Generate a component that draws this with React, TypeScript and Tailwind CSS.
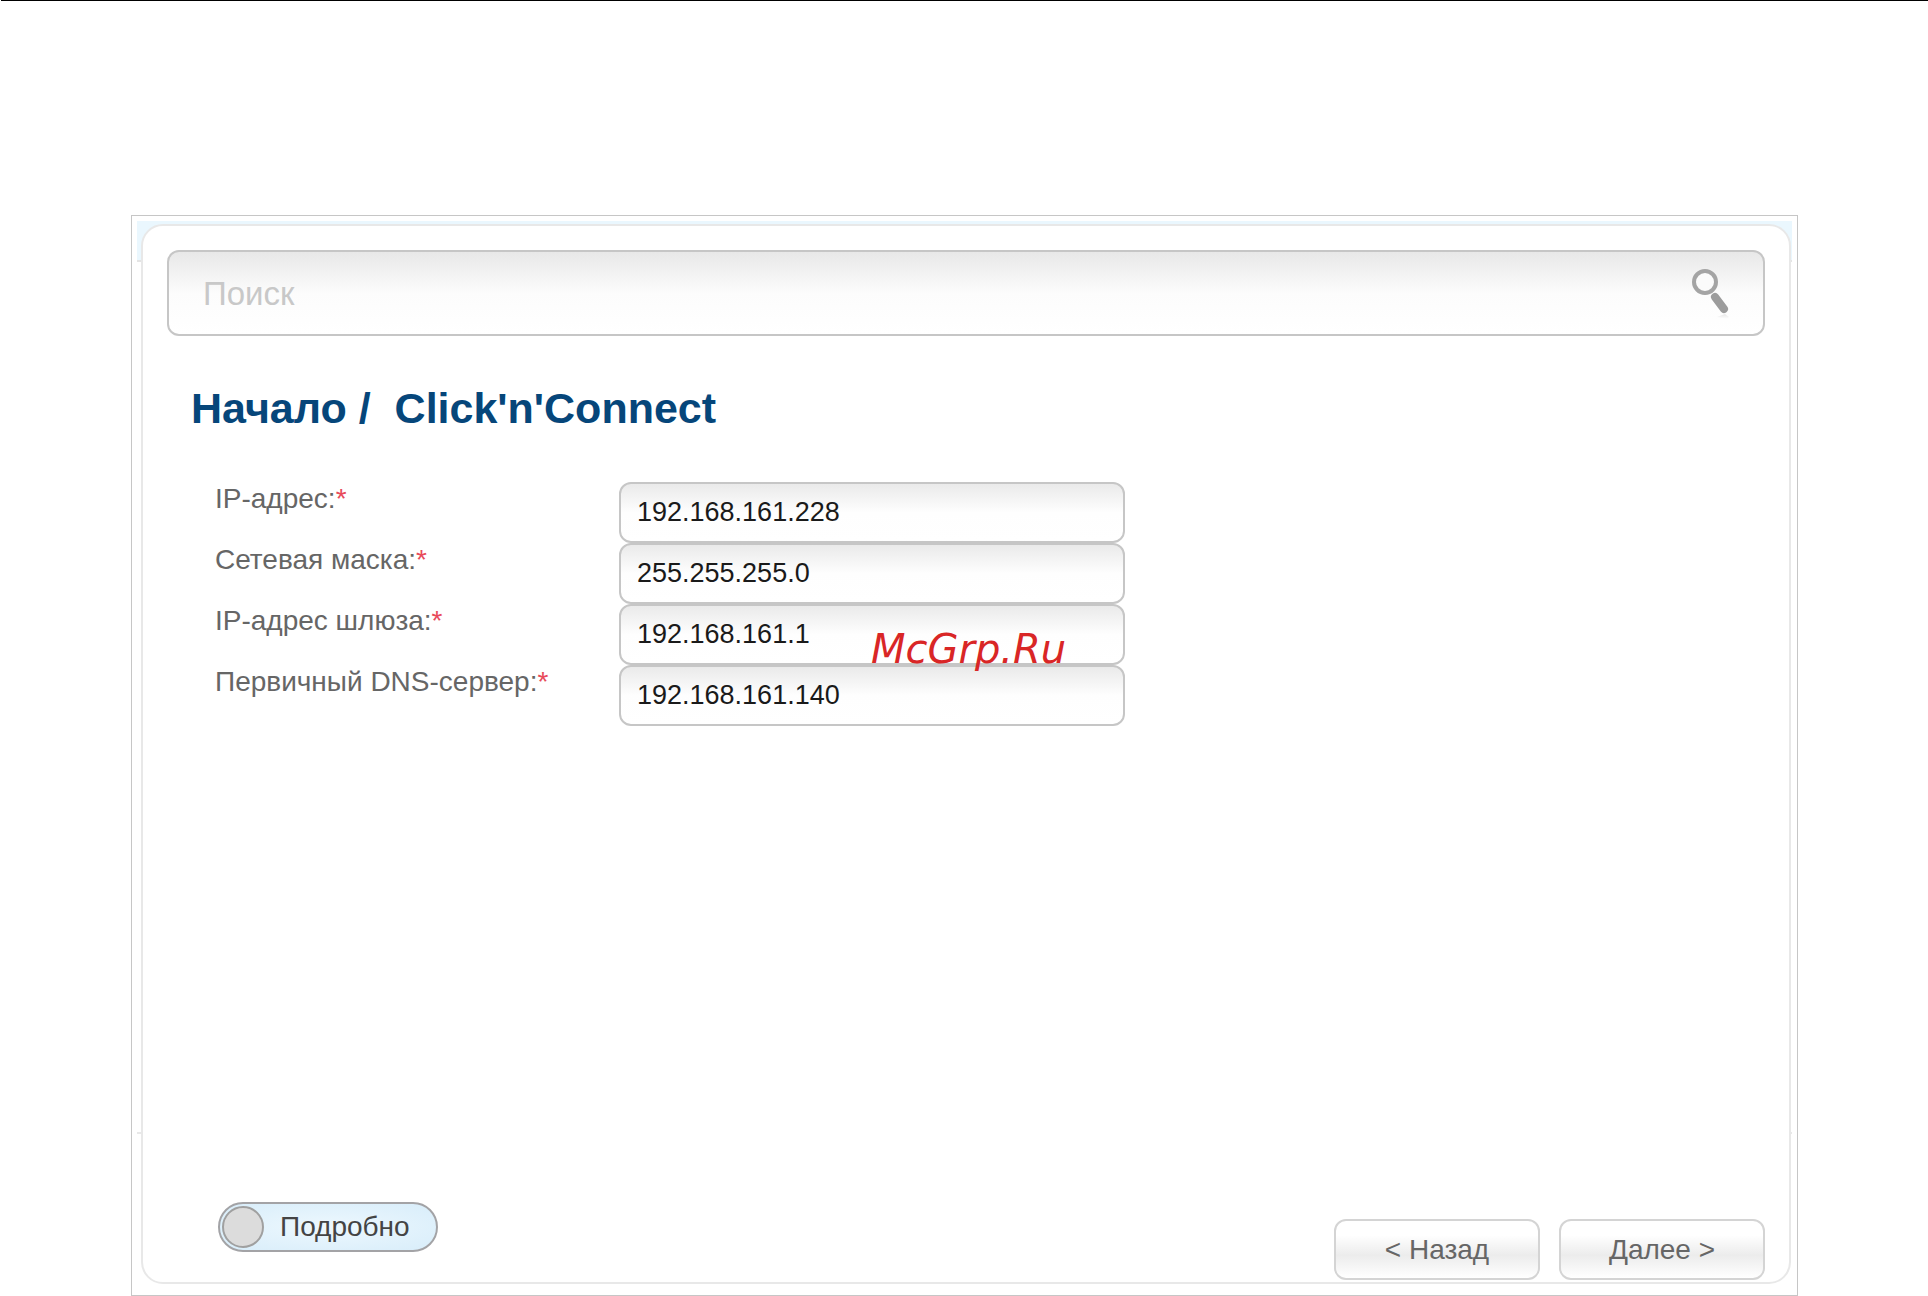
import { useState } from 'react';

interface Field {
  id: string;
  label: string;
  value: string;
}

const FIELDS: Field[] = [
  { id: 'ip',      label: 'IP-адрес:',             value: '192.168.161.228' },
  { id: 'mask',    label: 'Сетевая маска:',        value: '255.255.255.0' },
  { id: 'gateway', label: 'IP-адрес шлюза:',       value: '192.168.161.1' },
  { id: 'dns',     label: 'Первичный DNS-сервер:', value: '192.168.161.140' },
];

function SearchIcon() {
  return (
    <svg className="w-10 h-[52px]" viewBox="0 0 40 52" fill="none">
      <defs>
        <linearGradient id="glow" x1="0" y1="0" x2="0" y2="1">
          <stop offset="0" stopColor="#e6e6e6" />
          <stop offset="1" stopColor="#ffffff" />
        </linearGradient>
      </defs>
      <path d="M26 50 L34 47 L38 50 L36 52 Z" fill="url(#glow)" />
      <circle cx="14" cy="15" r="11" fill="#fbfbfb" stroke="#a4a4a4" strokeWidth="4" />
      <path d="M24 30 L33 42" stroke="#9c9c9c" strokeWidth="8" strokeLinecap="round" />
    </svg>
  );
}

function SearchBar() {
  return (
    <div className="flex items-center h-[86px] pl-[34px] pr-[32px] rounded-xl border-2 border-[#c6c6c6] bg-linear-to-b from-[#e8e8e8] via-[#fcfcfc] via-50% to-white">
      <input
        type="text"
        aria-label="Поиск"
        placeholder="Поиск"
        className="flex-1 min-w-0 pt-0.5 bg-transparent outline-none text-[33px] leading-10 placeholder:text-[#c8c8c8] placeholder:opacity-100"
      />
      <button type="button" aria-label="Найти" className="shrink-0">
        <SearchIcon />
      </button>
    </div>
  );
}

function FieldRow({ field, onChange }: { field: Field; onChange: (value: string) => void }) {
  return (
    <div className="flex h-[61px]">
      <label htmlFor={field.id} className="w-[404px] shrink-0 leading-[34px] text-[28px] text-[#666]">
        {field.label}
        <span className="text-[#e84a5a]">*</span>
      </label>
      <input
        id={field.id}
        type="text"
        value={field.value}
        onChange={e => onChange(e.target.value)}
        className="w-[506px] h-[61px] px-4 rounded-xl border-2 border-[#c6c6c6] bg-linear-to-b from-[#eaeaea] via-[#fefefe] via-50% to-white text-[27px] text-[#1a1a1a] outline-none"
      />
    </div>
  );
}

function NavButton({ children }: { children: string }) {
  return (
    <button
      type="button"
      className="w-[206px] h-[61px] rounded-xl border-2 border-[#d4d4d4] bg-linear-to-b from-white from-25% via-[#ececec] via-60% to-white text-[28px] text-[#666]"
    >
      {children}
    </button>
  );
}

export default function App() {
  const [fields, setFields]   = useState(FIELDS);
  const [details, setDetails] = useState(false);

  const update = (id: string, value: string) =>
    setFields(fields.map(f => (f.id === id ? { ...f, value } : f)));

  return (
    <div className="min-h-screen flex flex-col bg-white font-['Liberation_Sans',Arial,sans-serif]">
      <div className="h-px ml-px bg-black" />

      <div className="flex-1 flex flex-col mt-[214px] ml-[131px] mr-[130px] border border-[#c6c6c6] p-[5px]">
        {/* strip of the page behind the rounded panel */}
        <div className="flex-1 flex flex-col pt-[3px] pl-1 pr-px pb-1.5 bg-[linear-gradient(to_bottom,#eaf7fe_0,#eaf7fe_39px,#e4e4e4_39px,#e4e4e4_41px,white_41px,white_calc(100%-158px),#e8e8e8_calc(100%-158px),#e8e8e8_calc(100%-156px),white_calc(100%-156px))]">
          <main className="flex-1 flex flex-col rounded-[22px] border-2 border-[#e8e8e8] bg-white pt-6 px-6">
            <SearchBar />

            <h1 className="mt-[47px] ml-6 text-[43px] leading-[50px] font-bold text-[#06467a] whitespace-pre">
              {"Начало /  Click'n'Connect"}
            </h1>

            <form className="relative self-start mt-[49px] ml-12">
              {fields.map(f => (
                <FieldRow key={f.id} field={f} onChange={v => update(f.id, v)} />
              ))}
              <span className="absolute left-[656px] top-[145px] italic text-[40px] leading-[44px] text-[#d92626] font-['DejaVu_Sans',sans-serif] pointer-events-none">
                McGrp.Ru
              </span>
            </form>

            <div className="mt-auto flex items-end justify-between pl-[51px]">
              <label className="flex items-center gap-4 h-[50px] w-[220px] mb-[30px] pl-0.5 rounded-full border-2 border-[#a3a3a6] bg-[radial-gradient(#edf8fe,#d8edfa)] text-[28px] text-[#444]">
                <input
                  type="checkbox"
                  checked={details}
                  onChange={e => setDetails(e.target.checked)}
                  className="appearance-none size-[42px] shrink-0 rounded-full border-2 border-[#a0a0a0] bg-[#dcdcdc]"
                />
                Подробно
              </label>
              <div className="flex gap-[19px] pb-0.5">
                <NavButton>{'< Назад'}</NavButton>
                <NavButton>{'Далее >'}</NavButton>
              </div>
            </div>
          </main>
        </div>
      </div>
    </div>
  );
}
